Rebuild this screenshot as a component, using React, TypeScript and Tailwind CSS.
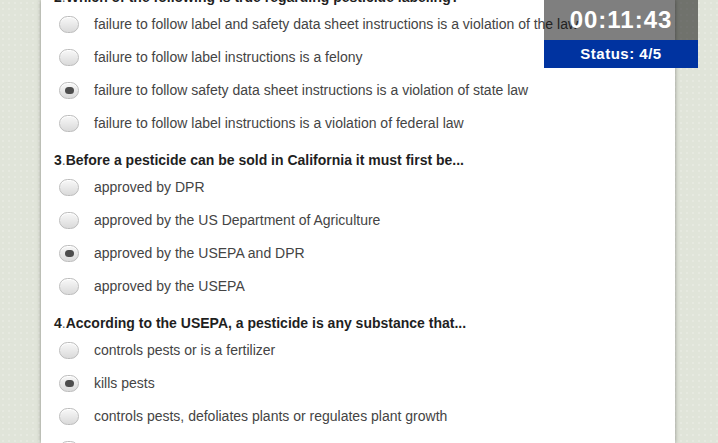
import React from "react";

type Question = {
  num: string;
  text: string;
  options: string[];
  picked: number;
};

const questions: Question[] = [
  {
    num: "2",
    text: "Which of the following is true regarding pesticide labeling?",
    options: [
      "failure to follow label and safety data sheet instructions is a violation of the law",
      "failure to follow label instructions is a felony",
      "failure to follow safety data sheet instructions is a violation of state law",
      "failure to follow label instructions is a violation of federal law",
    ],
    picked: 2,
  },
  {
    num: "3",
    text: "Before a pesticide can be sold in California it must first be...",
    options: [
      "approved by DPR",
      "approved by the US Department of Agriculture",
      "approved by the USEPA and DPR",
      "approved by the USEPA",
    ],
    picked: 2,
  },
  {
    num: "4",
    text: "According to the USEPA, a pesticide is any substance that...",
    options: [
      "controls pests or is a fertilizer",
      "kills pests",
      "controls pests, defoliates plants or regulates plant growth",
      "all of the above",
    ],
    picked: 1,
  },
];

function Radio({ checked }: { checked: boolean }) {
  return (
    <span className="flex h-[17px] w-[20px] shrink-0 items-center justify-center rounded-full border border-[#bdbdbd] bg-gradient-to-b from-[#f8f8f8] to-[#dadada] shadow-[inset_0_1px_0_#fff]">
      {checked && <span className="h-[7px] w-[9px] rounded-full bg-[#4d4d4d]" />}
    </span>
  );
}

export default function App() {
  return (
    <div
      className="relative h-[443px] w-[718px] overflow-hidden bg-[#e0e4d9] bg-[radial-gradient(circle,rgba(255,255,255,0.18)_1px,transparent_1.5px)] bg-[length:6px_6px]"
      style={{ fontFamily: '"Liberation Sans", Arial, sans-serif' }}
    >
      <div className="ml-[41px] flex h-full w-[634px] flex-col bg-white shadow-[0_0_4px_rgba(0,0,0,0.4)]">
        <div className="mt-[-23px] pl-[13px]">
          {questions.map((q) => (
            <div key={q.num}>
              <div className="flex h-[31px] items-end pb-[3px] text-[14px] leading-[16px] font-bold text-[#1f1f1f]">
                <span>{q.num}</span>
                <span className="font-normal text-[#666]">.</span>
                <span>{q.text}</span>
              </div>
              {q.options.map((o, i) => (
                <div key={o} className="flex h-[33px] items-center pl-[5px]">
                  <Radio checked={i === q.picked} />
                  <span className="ml-[15px] whitespace-nowrap text-[14px] text-[#444]">{o}</span>
                </div>
              ))}
            </div>
          ))}
        </div>
      </div>

      <div className="absolute left-[544px] top-0 w-[154px] text-white">
        <div className="flex h-[40px] items-center justify-center bg-black/50 text-[24px] font-bold tracking-[1px]">
          00:11:43
        </div>
        <div className="flex h-[28px] items-center justify-center bg-[#0033a0] text-[15px] font-bold tracking-[0.5px]">
          Status: 4/5
        </div>
      </div>
    </div>
  );
}
